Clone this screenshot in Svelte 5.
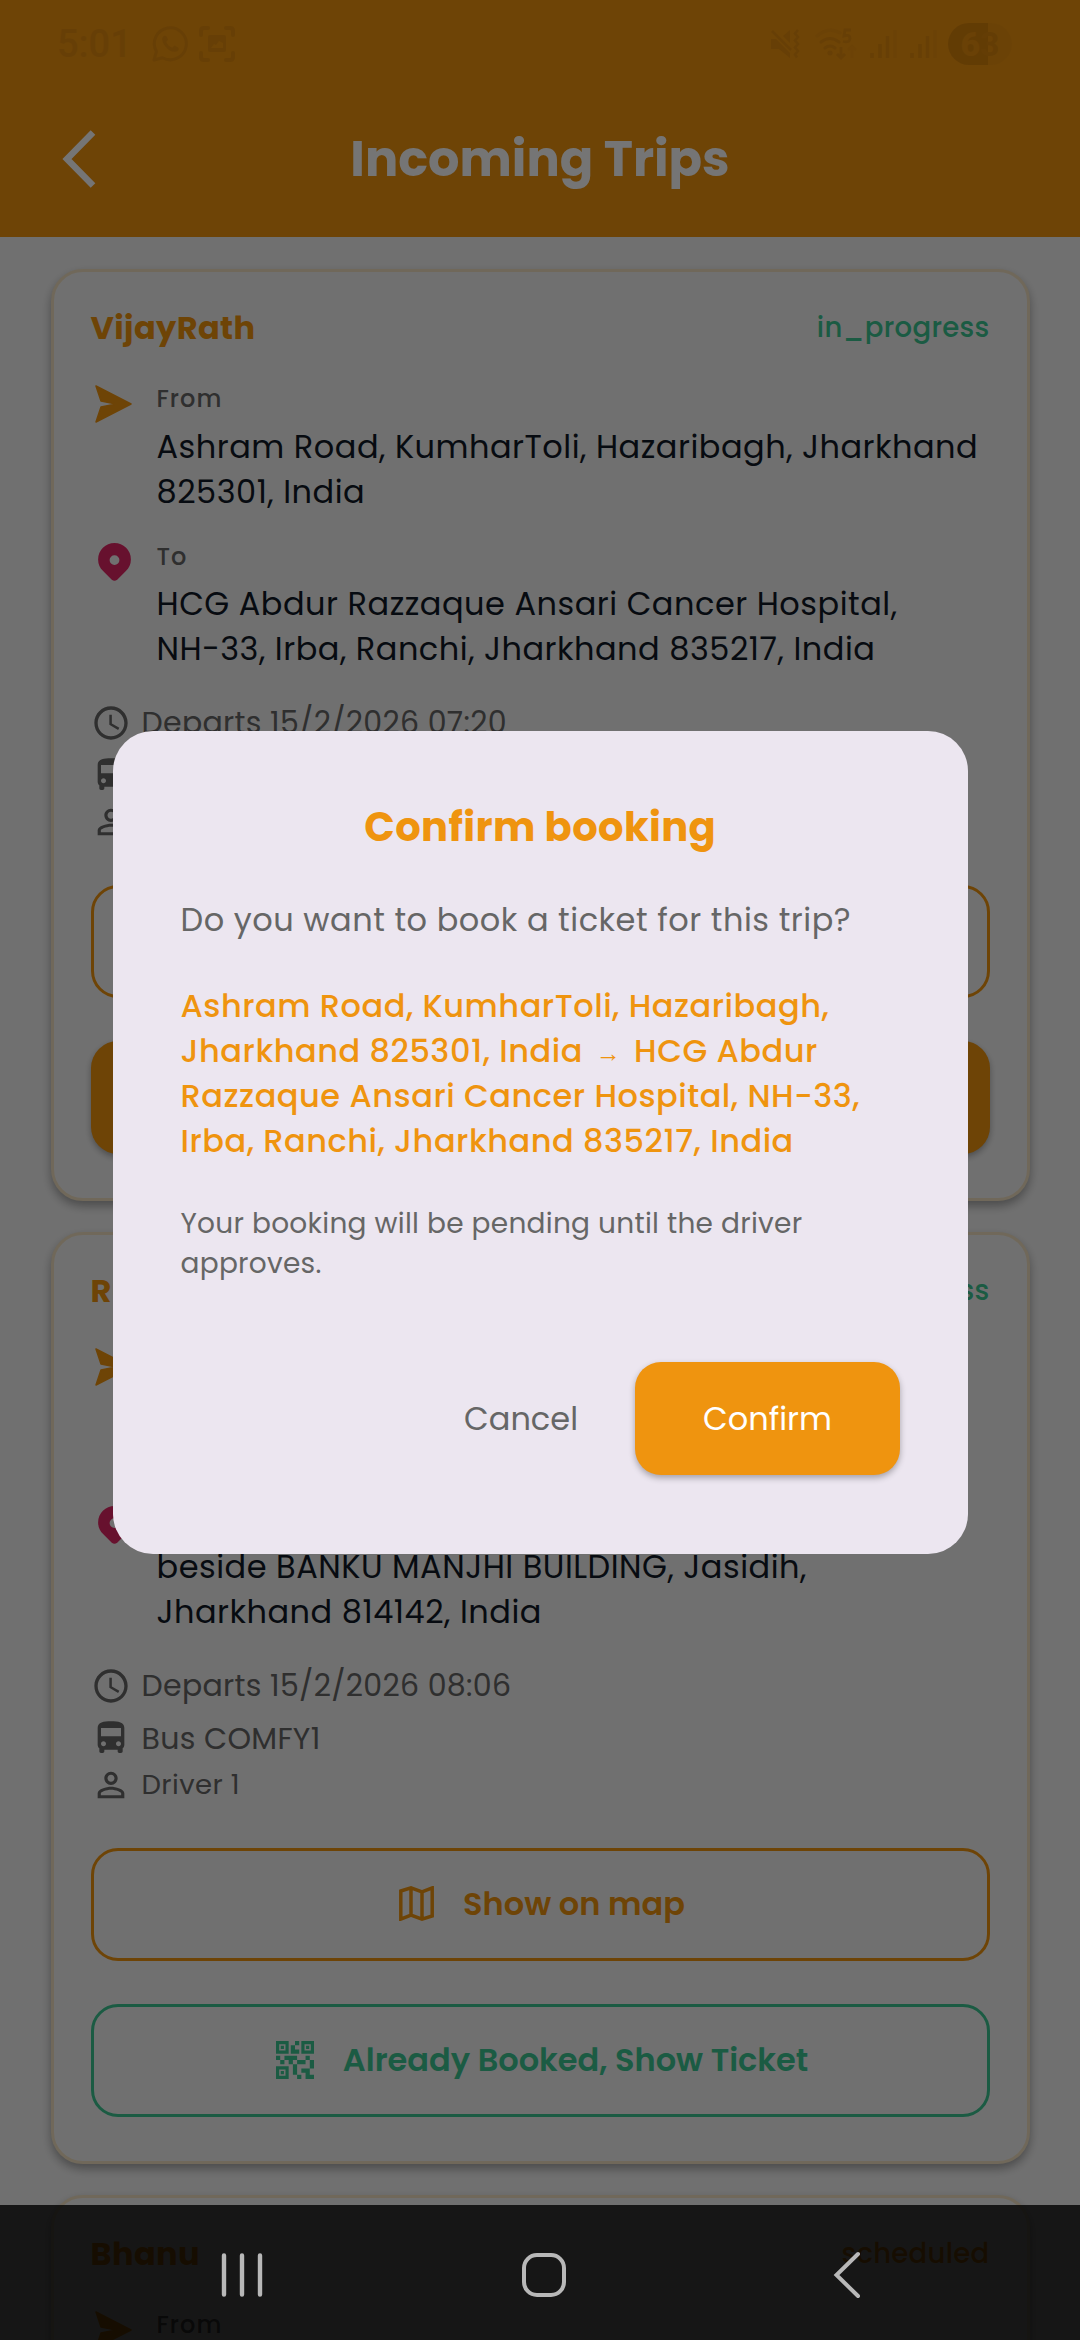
<script>
	const trips = [
		{
			name: "VijayRath",
			status: "in_progress",
			from: ["Ashram Road, KumharToli, Hazaribagh, Jharkhand", "825301, India"],
			to: ["HCG Abdur Razzaque Ansari Cancer Hospital,", "NH-33, Irba, Ranchi, Jharkhand 835217, India"],
			departs: "15/2/2026 07:20",
			bus: "COMFY1",
			driver: "Driver 1",
			booked: false
		},
		{
			name: "Rudra",
			status: "in_progress",
			from: ["Ranchi, Jharkhand", "834001, India"],
			to: ["beside BANKU MANJHI BUILDING, Jasidih,", "Jharkhand 814142, India"],
			departs: "15/2/2026 08:06",
			bus: "COMFY1",
			driver: "Driver 1",
			booked: true
		},
		{
			name: "Bhanu",
			status: "scheduled",
			from: ["Ranchi, Jharkhand", "834001, India"],
			to: ["Jasidih,", "Jharkhand 814142, India"],
			departs: "15/2/2026 09:00",
			bus: "COMFY1",
			driver: "Driver 1",
			booked: false
		}
	];

	let dialogOpen = $state(true);
</script>

<div class="screen">
	<header>
		<div class="status-bar">
			<span class="time">5:01</span>
			<svg class="whatsapp" width="36" height="36" viewBox="0 0 36 36">
				<path d="M2 34l2.4-8.4A16 16 0 1 1 10.500 31.700Z" fill="none" stroke="currentColor" stroke-width="3" stroke-linejoin="round" />
				<path d="M12 10c-3 2-2 6 1.500 10.500S22 27 25.500 25c1.500-1 1.500-3 .5-3.600l-3.500-1.900-2.300 2.200c-3-1.300-4.800-3.200-6-5.800l1.800-2.200-1.500-3.300c-.5-.8-1.500-1-2.500-.4z" fill="currentColor" />
			</svg>
			<svg class="capture" width="36" height="36" viewBox="0 0 36 36">
				<path d="M2 9V5q0-3 3-3h4M27 2h4q3 0 3 3v4M34 27v4q0 3-3 3h-4M9 34H5q-3 0-3-3v-4" fill="none" stroke="currentColor" stroke-width="4" stroke-linecap="round" />
				<path fill-rule="evenodd" d="M11 9h14q2 0 2 2v13q0 2-2 2H11q-2 0-2-2V11q0-2 2-2zM12 22h12v-5l-4-2-3 4-2-1z" fill="currentColor" />
			</svg>
			<span class="spacer"></span>
			<svg width="30" height="30" viewBox="0 0 30 30">
				<path d="M1 10h5l14 14v5L9 20H1zM13 7l7-6v13z" fill="currentColor" />
				<path d="M2 2l19 19M28 1l-3 3.500 3 3.500-3 3.500 3 3.500-3 3.500 3 3.500-3 3.500 2 3" fill="none" stroke="currentColor" stroke-width="2.500" />
			</svg>
			<svg class="wifi" width="42" height="32" viewBox="0 0 42 32">
				<path d="M2 8q12-10 23-3" fill="none" stroke="currentColor" stroke-width="3" stroke-linecap="round" opacity=".4" />
				<path d="M6 14q9-7 18 0M10 20q5-4 10 0" fill="none" stroke="currentColor" stroke-width="3" stroke-linecap="round" />
				<circle cx="15" cy="25" r="2.500" fill="currentColor" />
				<path d="M36 2h-6l-1 6q6-2 6 2.500t-7 3M26 19v10M22 26l4 4 4-4" fill="none" stroke="currentColor" stroke-width="2.800" />
				<path d="M37 30V19M33 22l4-4 4 4" fill="none" stroke="currentColor" stroke-width="2.500" opacity=".3" />
			</svg>
			{#each [1, 2] as sim (sim)}
				<svg class="signal" width="27" height="30" viewBox="0 0 27 30">
					<path d="M2 24v5M10 15v14M17.500 7v22" stroke="currentColor" stroke-width="3.500" />
					<path d="M25 1v28" stroke="currentColor" stroke-width="3.500" opacity=".3" />
				</svg>
			{/each}
			<span class="battery"><b>6</b>3</span>
		</div>
		<div class="title-bar">
			<svg width="34" height="58" viewBox="0 0 34 58">
				<path d="M31 2.500L5 29l26 26.500" fill="none" stroke="currentColor" stroke-width="6.500" />
			</svg>
			<h1>Incoming Trips</h1>
		</div>
	</header>

	<main>
		{#each trips as trip (trip.name)}
			<article class="card">
				<div class="card-head">
					<h2>{trip.name}</h2>
					<span class="status" class:scheduled={trip.status === "scheduled"}>{trip.status}</span>
				</div>

				<div class="stop">
					<svg class="send" width="37" height="38" viewBox="0 0 37 38">
						<path d="M1 1l35 18L1 37l5-15 15-3L6 16z" fill="currentColor" stroke="currentColor" stroke-width="1.500" stroke-linejoin="round" />
					</svg>
					<div>
						<p class="label">From</p>
						<p class="address">{trip.from[0]}<br />{trip.from[1]}</p>
					</div>
				</div>
				<div class="stop">
					<svg class="pin" width="33" height="38" viewBox="0 0 33 38">
						<path fill-rule="evenodd" d="M16.500 0a16.400 16.400 0 0 1 16.400 16.400c0 5-2 8.600-5 11.600l-8.700 8.800q-2.700 2-5.400 0L5.100 28C2 25 .1 21.400.1 16.400A16.400 16.400 0 0 1 16.500 0zm0 12.200a4.900 4.900 0 1 0 0 9.800 4.900 4.900 0 0 0 0-9.800z" fill="currentColor" />
					</svg>
					<div>
						<p class="label">To</p>
						<p class="address">{trip.to[0]}<br />{trip.to[1]}</p>
					</div>
				</div>

				<div class="details">
					<div class="detail">
						<svg width="40" height="40" viewBox="0 0 24 24">
							<path d="M11.990 2C6.470 2 2 6.480 2 12s4.470 10 9.990 10C17.520 22 22 17.520 22 12S17.520 2 11.990 2zM12 20c-4.420 0-8-3.580-8-8s3.580-8 8-8 8 3.580 8 8-3.580 8-8 8zm.5-13H11v6l5.250 3.150.75-1.230-4.500-2.670z" fill="currentColor" />
						</svg>
						<span>Departs {trip.departs}</span>
					</div>
					<div class="detail bus">
						<svg width="40" height="40" viewBox="0 0 24 24">
							<path d="M4 16c0 .88.39 1.670 1 2.220V20c0 .55.45 1 1 1h1c.55 0 1-.45 1-1v-1h8v1c0 .55.45 1 1 1h1c.55 0 1-.45 1-1v-1.780c.61-.55 1-1.340 1-2.220V6c0-3.500-3.580-4-8-4s-8 .5-8 4v10zm3.500 1c-.83 0-1.500-.67-1.500-1.500S6.670 14 7.500 14s1.500.67 1.500 1.500S8.330 17 7.500 17zm9 0c-.83 0-1.500-.67-1.500-1.500s.67-1.500 1.500-1.500 1.500.67 1.500 1.500-.67 1.500-1.500 1.500zm1.500-6H6V6h12v5z" fill="currentColor" />
						</svg>
						<span>Bus {trip.bus}</span>
					</div>
					<div class="detail driver">
						<svg width="40" height="40" viewBox="0 0 24 24">
							<path d="M12 5.900c1.160 0 2.100.94 2.100 2.100s-.94 2.100-2.100 2.100S9.900 9.160 9.900 8s.94-2.100 2.100-2.100m0 9c2.970 0 6.100 1.460 6.100 2.100v1.100H5.900V17c0-.64 3.130-2.100 6.100-2.100M12 4C9.790 4 8 5.790 8 8s1.790 4 4 4 4-1.790 4-4-1.790-4-4-4zm0 9c-2.670 0-8 1.340-8 4v3h16v-3c0-2.660-5.330-4-8-4z" fill="currentColor" />
						</svg>
						<span>{trip.driver}</span>
					</div>
				</div>

				<button class="action outline">
					<svg width="35" height="35" viewBox="0 0 35 35">
						<path d="M1.800 5L12 1.900l11 4 10.200-4V30L23 33.100l-11-4-10.200 4zM12 1.900v27.200M23 5.900v27.200" fill="none" stroke="currentColor" stroke-width="3.500" />
					</svg>
					Show on map
				</button>
				{#if trip.booked}
					<button class="action ticket">
						<svg width="38" height="38" viewBox="3 3 18 18">
							<path d="M15 21h-2v-2h2zM13 14h-2v5h2zM21 12h-2v4h2zM19 10h-2v2h2zM7 12H5v2h2zM5 10H3v2h2zM12 5h2V3h-2zM4.500 4.500v3h3v-3zM9 9H3V3h6zM4.500 16.500v3h3v-3zM9 21H3v-6h6zM16.500 4.500v3h3v-3zM21 9h-6V3h6zM19 19v-3h-4v2h2v3h4v-2zM17 12h-4v2h4zM13 10H7v2h2v2h2v-2h2zM14 9V7h-2V5h-2v4zM6.750 5.250h-1.500v1.500h1.500zM6.750 17.250h-1.500v1.500h1.500zM18.750 5.250h-1.500v1.500h1.500z" fill="currentColor" fill-rule="evenodd" />
						</svg>
						Already Booked, Show Ticket
					</button>
				{:else}
					<button class="action filled">Book Ticket</button>
				{/if}
			</article>
		{/each}
	</main>

	{#if dialogOpen}
		<div class="scrim">
			<div class="dialog" role="dialog" aria-labelledby="dialog-title">
				<h2 id="dialog-title">Confirm booking</h2>
				<p class="question">Do you want to book a ticket for this trip?</p>
				<p class="route">
					Ashram Road, KumharToli, Hazaribagh,<br />
					Jharkhand 825301, India <span class="arrow">→</span> HCG Abdur<br />
					Razzaque Ansari Cancer Hospital, NH-33,<br />
					Irba, Ranchi, Jharkhand 835217, India
				</p>
				<p class="note">Your booking will be pending until the driver<br />approves.</p>
				<div class="dialog-actions">
					<button class="cancel" onclick={() => (dialogOpen = false)}>Cancel</button>
					<button class="confirm" onclick={() => (dialogOpen = false)}>Confirm</button>
				</div>
			</div>
		</div>
	{/if}

	<nav>
		<svg width="44" height="46" viewBox="0 0 44 46">
			<path d="M4 3.500v39M22 3.500v39M40 3.500v39" stroke="currentColor" stroke-width="4.400" stroke-linecap="round" />
		</svg>
		<svg class="home" width="46" height="46" viewBox="0 0 46 46">
			<rect x="3" y="3" width="40" height="40" rx="13" fill="none" stroke="currentColor" stroke-width="4" />
		</svg>
		<svg width="28" height="48" viewBox="0 0 28 48">
			<path d="M25 3L3.500 24 25 45" fill="none" stroke="currentColor" stroke-width="4" stroke-linecap="round" />
		</svg>
	</nav>
</div>

<style>
	:global(body) {
		margin: 0;
	}

	.screen {
		--orange: #ef940f;
		--green: #3bc692;
		--grey: #666;
		position: relative;
		width: 1080px;
		height: 2340px;
		overflow: hidden;
		background: #f4f4f4;
		font-family: Poppins, Inter, "Liberation Sans", sans-serif;
	}

	h1,
	h2,
	p {
		margin: 0;
	}

	svg {
		display: block;
		flex: none;
	}

	button {
		font-family: inherit;
		border: none;
		background: none;
		padding: 0;
		box-sizing: border-box;
	}

	header {
		height: 237px;
		background: var(--orange);
	}

	.status-bar {
		display: flex;
		align-items: center;
		height: 88px;
		box-sizing: border-box;
		padding: 0 68px 0 57px;
		color: #e08a0e;
	}

	.time {
		width: 95px;
		font: 500 38px/88px Roboto, sans-serif;
	}

	.capture {
		margin-left: 11px;
	}

	.spacer {
		flex: 1;
	}

	.wifi {
		margin-left: 15px;
	}

	.signal {
		margin-left: 13px;
	}

	.battery {
		width: 64px;
		height: 42px;
		margin-left: 11px;
		border-radius: 21px;
		background: linear-gradient(90deg, #d6830a 62%, #ea910f 62%);
		color: #da860c;
		font: 700 34px/42px Roboto, sans-serif;
		text-align: center;
	}

	.battery b {
		color: #e68e0e;
	}

	.title-bar {
		display: grid;
		grid-template-columns: 34px 1fr 34px;
		align-items: center;
		height: 142px;
		padding: 0 62px;
		color: #fff;
	}

	h1 {
		text-align: center;
		font-size: 49.400px;
		font-weight: 700;
		line-height: 60px;
	}

	main {
		display: flex;
		flex-direction: column;
		gap: 31px;
		padding: 32px 50.500px 0;
	}

	.card {
		box-sizing: border-box;
		height: 932px;
		flex: none;
		padding: 32px 37px 0;
		border: 3px solid #f3e3c4;
		border-radius: 32px;
		background: #f4f4f4;
		box-shadow: 0 5px 10px rgba(0, 0, 0, 0.32);
	}

	.card-head {
		display: flex;
		justify-content: space-between;
		align-items: center;
		height: 48px;
		margin-bottom: 28px;
	}

	h2 {
		color: var(--orange);
		font-size: 32px;
		font-weight: 700;
		letter-spacing: 0.400px;
	}

	.status {
		color: var(--green);
		font-size: 27.500px;
		font-weight: 500;
		line-height: 44px;
		letter-spacing: 0.300px;
	}

	.status.scheduled {
		color: var(--orange);
	}

	.stop {
		display: grid;
		grid-template-columns: 66px 1fr;
		margin-bottom: 24px;
	}

	.stop svg {
		margin: 5px 0 0 4px;
	}

	.send {
		color: var(--orange);
	}

	.stop .pin {
		margin-left: 7px;
		color: #e02764;
	}

	.label {
		padding-top: 1px;
		margin-bottom: 6.500px;
		color: var(--grey);
		font-size: 24px;
		font-weight: 500;
		line-height: 36px;
		letter-spacing: 1px;
	}

	.address {
		color: #111827;
		font-size: 32px;
		line-height: 45px;
		letter-spacing: 0.500px;
		white-space: nowrap;
	}

	.details {
		margin-bottom: 42px;
		padding-top: 2px;
	}

	.detail {
		display: flex;
		align-items: center;
		gap: 11px;
		height: 52px;
		color: var(--grey);
		font-size: 30px;
		letter-spacing: 0.300px;
	}

	.bus span {
		padding-top: 1px;
	}

	.driver {
		height: 42px;
		font-size: 27.500px;
		letter-spacing: 0.400px;
	}

	.action {
		display: flex;
		justify-content: center;
		align-items: center;
		gap: 29px;
		width: 100%;
		height: 113px;
		margin-bottom: 43px;
		padding: 0 0 2px 4px;
		border-radius: 27px;
		font-size: 32px;
		font-weight: 600;
	}

	.outline {
		border: 3px solid var(--orange);
		color: var(--orange);
	}

	.ticket {
		border: 3px solid var(--green);
		color: var(--green);
	}

	.filled {
		background: var(--orange);
		color: #fff;
		box-shadow: 0 3px 6px rgba(0, 0, 0, 0.3);
	}

	.scrim {
		position: absolute;
		inset: 0;
		display: flex;
		justify-content: center;
		align-items: flex-start;
		padding-top: 731px;
		background: rgba(0, 0, 0, 0.54);
	}

	.dialog {
		box-sizing: border-box;
		width: 855px;
		height: 823px;
		padding: 66px 67.500px 0 68px;
		border-radius: 40px;
		background: #ece6f0;
	}

	.dialog h2 {
		font-size: 40px;
		line-height: 60px;
		text-align: center;
	}

	.question {
		margin-top: 40px;
		color: var(--grey);
		font-size: 32px;
		line-height: 46px;
		letter-spacing: 0.520px;
		white-space: nowrap;
	}

	.route {
		margin-top: 40px;
		color: var(--orange);
		font-size: 32px;
		font-weight: 500;
		line-height: 45px;
		letter-spacing: 0.520px;
		white-space: nowrap;
	}

	.arrow {
		padding: 0 4px;
		font-family: "Liberation Serif", serif;
		font-size: 25px;
		font-weight: 400;
		line-height: 1;
	}

	.note {
		margin-top: 41px;
		color: var(--grey);
		font-size: 28px;
		line-height: 40px;
		letter-spacing: 0.270px;
		white-space: nowrap;
	}

	.dialog-actions {
		display: flex;
		justify-content: flex-end;
		align-items: center;
		gap: 57px;
		margin-top: 78px;
	}

	.cancel {
		color: var(--grey);
		font-size: 32px;
	}

	.confirm {
		width: 265px;
		height: 113px;
		border-radius: 26px;
		background: var(--orange);
		color: #fff;
		font-size: 32px;
		box-shadow: 0 3px 6px rgba(0, 0, 0, 0.3);
	}

	nav {
		position: absolute;
		left: 0;
		right: 0;
		bottom: 0;
		display: flex;
		align-items: center;
		height: 135px;
		box-sizing: border-box;
		padding: 4px 0 0 220px;
		background: rgba(0, 0, 0, 0.8);
		color: #b8b8b8;
	}

	.home {
		margin: 0 266px 0 257px;
	}
</style>
